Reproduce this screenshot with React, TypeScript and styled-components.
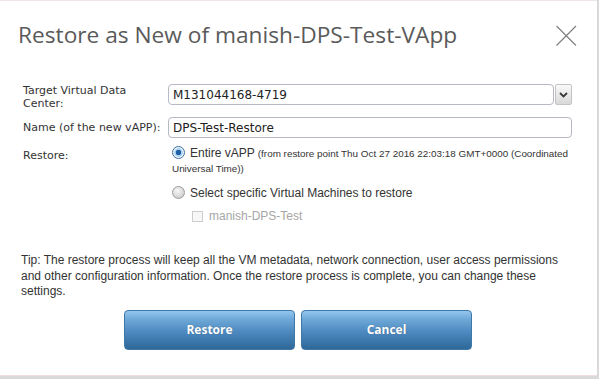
import React from 'react';
import styled, { createGlobalStyle } from 'styled-components';

const GlobalStyle = createGlobalStyle`
  html, body {
    margin: 0;
    padding: 0;
    background: #d9d9d9;
  }
  body {
    width: 599px;
    height: 379px;
    overflow: hidden;
  }
`;

const Dialog = styled.section`
  box-sizing: border-box;
  width: 597px;
  height: 376px;
  background: #fff;
  border-top: 1px solid #efe6ea;
  border-bottom: 1px solid #f0dede;
  display: flex;
  flex-direction: column;
`;

const Header = styled.header`
  display: flex;
  align-items: center;
  justify-content: space-between;
  padding: 18px 19px 2px 18px;
  height: 30px;
`;

const Title = styled.h1`
  margin: 0;
  font-family: 'Open Sans', sans-serif;
  font-weight: 400;
  font-size: 22.7px;
  color: #5a5a5a;
`;

const CloseButton = styled.button`
  border: 0;
  background: none;
  padding: 0;
  margin-top: 4px;
  width: 24px;
  height: 24px;
  cursor: pointer;
`;

const Form = styled.div`
  padding: 33px 25px 0 23px;
  display: grid;
  grid-template-columns: 145px 1fr;
  row-gap: 7px;
  font-family: 'DejaVu Sans', Tahoma, sans-serif;
  font-size: 11px;
  color: #333;
`;

const Label = styled.label<{ $top?: number }>`
  line-height: 13px;
  padding-top: ${({ $top }) => $top ?? 0}px;
`;

const InputRow = styled.div`
  display: flex;
  gap: 1px;
  height: 21px;
`;

const Field = styled.div`
  box-sizing: border-box;
  flex: 1;
  height: 21px;
  border: 1px solid #b6b9c6;
  border-radius: 4px;
  padding: 0 5px 0 4px;
  display: flex;
  align-items: center;
  font-size: 12px;
  color: #222;
  background: #fff;
`;

const DropButton = styled.div`
  box-sizing: border-box;
  width: 17px;
  height: 21px;
  border: 1px solid #c4c4c4;
  border-radius: 2px;
  background: linear-gradient(#fafafa, #d8d8d8);
  display: flex;
  align-items: center;
  justify-content: center;
`;

const Options = styled.div`
  display: flex;
  flex-direction: column;
  padding: 1px 0 0 4px;
  font-family: 'Liberation Sans', Arial, sans-serif;
`;

const Option = styled.div`
  font-size: 12px;
  line-height: 15px;
  color: #333;
  margin-bottom: 10px;
`;

const Radio = styled.span<{ $checked?: boolean }>`
  box-sizing: border-box;
  display: inline-block;
  vertical-align: -2px;
  width: 13px;
  height: 13px;
  margin-right: 5px;
  border-radius: 50%;
  border: 1px solid ${({ $checked }) => ($checked ? '#40709f' : '#9c9c9c')};
  background: ${({ $checked }) =>
    $checked
      ? 'radial-gradient(circle, #1d5ea4 0 2.5px, #a9d3f1 3px 4px, #e9f4fc 4.5px)'
      : 'radial-gradient(circle at 40% 35%, #f6f6f6, #c4c4c4)'};
`;

const Small = styled.span`
  font-size: 9.9px;
`;

const CheckRow = styled.div`
  display: flex;
  align-items: center;
  gap: 6px;
  padding-left: 20px;
  margin-top: -2px;
  color: #a6a6a6;
  font-size: 12px;
`;

const Checkbox = styled.span`
  box-sizing: border-box;
  width: 11px;
  height: 11px;
  border: 1px solid #cdcdcd;
  background: #f7f7f7;
`;

const Tip = styled.p`
  margin: 30px 0 0 21px;
  width: 560px;
  font-family: 'Liberation Sans', Arial, sans-serif;
  font-size: 12px;
  line-height: 15.5px;
  color: #333;
`;

const Footer = styled.footer`
  display: flex;
  gap: 6px;
  padding: 10px 0 0 124px;
`;

const ActionButton = styled.button`
  box-sizing: border-box;
  width: 171px;
  height: 40px;
  border: 1px solid #3f77a6;
  border-radius: 4px;
  background: linear-gradient(#94c7ef 0%, #6ea8d8 22%, #4d89bf 55%, #2e6899 100%);
  color: #fff;
  font-family: 'Open Sans', sans-serif;
  font-weight: 700;
  font-size: 12px;
  text-shadow: 0 0 1px rgba(0, 0, 0, 0.3);
  cursor: pointer;
`;

const CloseIcon = () => (
  <svg width="24" height="24" viewBox="0 0 24 24">
    <path d="M2.5 2 L22 21.5 M22 2 L2.5 21.5" stroke="#7c7c7c" strokeWidth="1.1" fill="none" />
  </svg>
);

const Chevron = () => (
  <svg width="9" height="6" viewBox="0 0 9 6">
    <path d="M1 1 L4.5 4.5 L8 1" stroke="#3a3a3a" strokeWidth="1.8" fill="none" />
  </svg>
);

export default function App() {
  return (
    <>
      <GlobalStyle />
      <Dialog>
        <Header>
          <Title>Restore as New of manish-DPS-Test-VApp</Title>
          <CloseButton aria-label="Close">
            <CloseIcon />
          </CloseButton>
        </Header>
        <Form>
          <Label>
            Target Virtual Data
            <br />
            Center:
          </Label>
          <InputRow>
            <Field>M131044168-4719</Field>
            <DropButton>
              <Chevron />
            </DropButton>
          </InputRow>
          <Label $top={4}>Name (of the new vAPP):</Label>
          <InputRow>
            <Field>DPS-Test-Restore</Field>
          </InputRow>
          <Label $top={4}>Restore:</Label>
          <Options>
            <Option>
              <Radio $checked />
              Entire vAPP <Small>(from restore point Thu Oct 27 2016 22:03:18 GMT+0000 (Coordinated Universal Time))</Small>
            </Option>
            <Option>
              <Radio />
              Select specific Virtual Machines to restore
            </Option>
            <CheckRow>
              <Checkbox />
              manish-DPS-Test
            </CheckRow>
          </Options>
        </Form>
        <Tip>
          Tip: The restore process will keep all the VM metadata, network connection, user access permissions and
          other configuration information. Once the restore process is complete, you can change these settings.
        </Tip>
        <Footer>
          <ActionButton>Restore</ActionButton>
          <ActionButton>Cancel</ActionButton>
        </Footer>
      </Dialog>
    </>
  );
}
